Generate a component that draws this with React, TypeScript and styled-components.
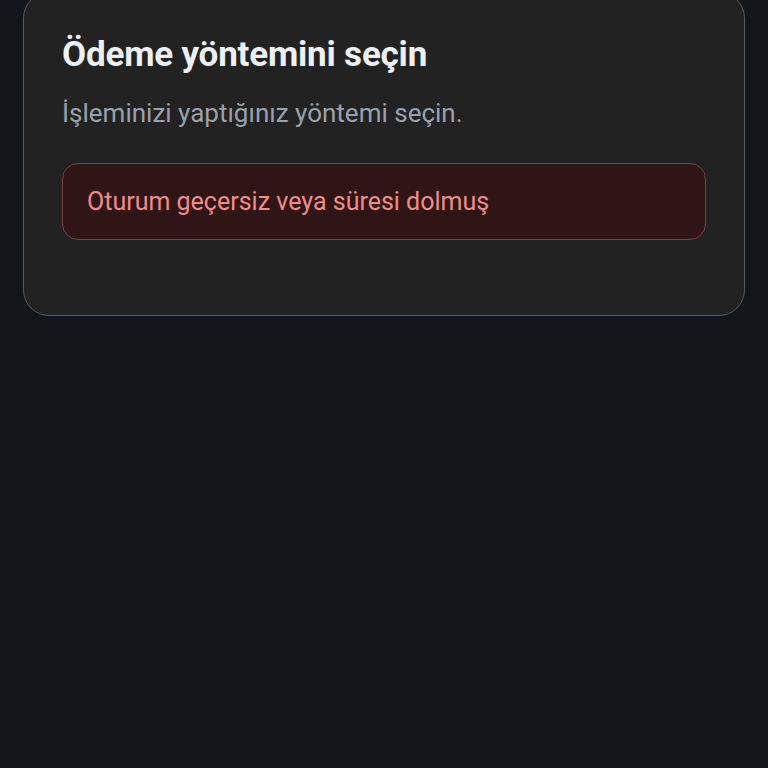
import React from 'react';
import styled, { createGlobalStyle } from 'styled-components';

const GlobalStyle = createGlobalStyle`
  html, body {
    margin: 0;
    padding: 0;
    background: #121519;
    font-family: Roboto, 'Liberation Sans', sans-serif;
  }
`;

const StyledPage = styled.div`
  min-height: 768px;
  padding: 0 23px;
  box-sizing: border-box;
  background: #121519;
  overflow: hidden;
`;

const StyledCard = styled.div`
  margin-top: -8px;
  background: #222222;
  border: 1.5px solid #575a62;
  border-radius: 26px;
  padding: 40px 38px 75px;
  display: flex;
  flex-direction: column;
`;

const StyledTitle = styled.h1`
  margin: 0;
  color: #eef0f7;
  font: 700 35px Roboto, 'Liberation Sans', sans-serif;
  line-height: 44px;
  letter-spacing: -0.2px;
`;

const StyledSubtitle = styled.p`
  margin: 19px 0 0;
  color: #9ba1ac;
  font: 400 26px Roboto, 'Liberation Sans', sans-serif;
  line-height: 34px;
`;

const StyledAlert = styled.div`
  margin-top: 33px;
  height: 77px;
  box-sizing: border-box;
  display: flex;
  align-items: center;
  padding: 0 24px;
  background: #2f1516;
  border: 1.5px solid #7e4246;
  border-radius: 16px;
  color: #f28b8b;
  font: 400 25px Roboto, 'Liberation Sans', sans-serif;
`;

function App() {
  return (
    <>
      <GlobalStyle />
      <StyledPage>
        <StyledCard>
          <StyledTitle>Ödeme yöntemini seçin</StyledTitle>
          <StyledSubtitle>İşleminizi yaptığınız yöntemi seçin.</StyledSubtitle>
          <StyledAlert>Oturum geçersiz veya süresi dolmuş</StyledAlert>
        </StyledCard>
      </StyledPage>
    </>
  );
}

export default App;
